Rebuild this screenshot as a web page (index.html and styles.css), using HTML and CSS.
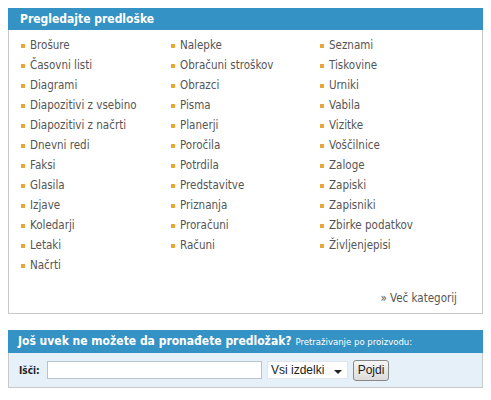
FILE: index.html
```html
<!DOCTYPE html>
<html>
<head>
<meta charset="utf-8">
<link rel="stylesheet" href="styles.css">
</head>
<body>
<div class="box browse">
  <div class="box-head">Pregledajte predloške</div>
  <div class="box-body">
    <div class="cols">
      <ul class="col">
        <li>Brošure</li><li>Časovni listi</li><li>Diagrami</li><li>Diapozitivi z vsebino</li><li>Diapozitivi z načrti</li><li>Dnevni redi</li><li>Faksi</li><li>Glasila</li><li>Izjave</li><li>Koledarji</li><li>Letaki</li><li>Načrti</li>
      </ul>
      <ul class="col">
        <li>Nalepke</li><li>Obračuni stroškov</li><li>Obrazci</li><li>Pisma</li><li>Planerji</li><li>Poročila</li><li>Potrdila</li><li>Predstavitve</li><li>Priznanja</li><li>Proračuni</li><li>Računi</li>
      </ul>
      <ul class="col">
        <li>Seznami</li><li>Tiskovine</li><li>Urniki</li><li>Vabila</li><li>Vizitke</li><li>Voščilnice</li><li>Zaloge</li><li>Zapiski</li><li>Zapisniki</li><li>Zbirke podatkov</li><li>Življenjepisi</li>
      </ul>
    </div>
    <div class="more">» Več kategorij</div>
  </div>
</div>
<div class="box search">
  <div class="box-head"><b>Još uvek ne možete da pronađete predložak?</b> <span class="sub">Pretraživanje po proizvodu:</span></div>
  <div class="search-body">
    <label class="lbl">Išči:</label>
    <input class="q" type="text">
    <div class="sel"><span>Vsi izdelki</span><span class="arr"></span></div>
    <button class="btn">Pojdi</button>
  </div>
</div>
</body>
</html>
```
FILE: styles.css
```css
body {
  margin: 8px;
  font-family: "DejaVu Sans Condensed", "DejaVu Sans", sans-serif;
  font-size: 11.5px;
  color: #555;
  background: #fff;
}
.box {
  width: 473px;
  border: 1px solid #c9c9c9;
  border-top: none;
}
.box-head {
  background: #3592c4;
  color: #fff;
  height: 22px;
  line-height: 22px;
  padding-left: 12px;
  font-weight: bold;
  font-size: 12px;
  margin: 0 -1px 0 -1px;
}
.box-body {
  padding: 6px 0 0 11px;
  height: 283px;
  box-sizing: border-box;
}
.cols {
  display: flex;
}
.col {
  list-style: none;
  margin: 0;
  padding: 0;
  width: 150px;
}
.col:nth-child(2) { width: 149px; }
.col li {
  height: 20px;
  line-height: 18px;
  padding-left: 10px;
  position: relative;
}
.col li::before {
  content: "";
  position: absolute;
  left: 1px;
  top: 8px;
  width: 4px;
  height: 4px;
  background: #e8a53a;
}
.more {
  text-align: right;
  padding-right: 25px;
  margin-top: 13px;
  line-height: 18px;
}
.search {
  margin-top: 16px;
  background: #e5f0f9;
}
.search .box-head {
  height: 23px;
  line-height: 23px;
  padding-left: 10px;
}
.sub {
  font-weight: normal;
  font-size: 9.5px;
}
.search-body {
  display: flex;
  align-items: center;
  height: 34px;
  padding-left: 10px;
}
.lbl {
  font-weight: bold;
  font-size: 10px;
  color: #222;
  width: 28px;
}
.q {
  width: 215px;
  height: 18px;
  box-sizing: border-box;
  border: 1px solid #b7c3cd;
  margin: 0;
  padding: 0;
  background: #fff;
}
.sel {
  margin-left: 5px;
  width: 81px;
  height: 18px;
  background: #fff;
  border: 1px solid #e0e6ec;
  box-sizing: border-box;
  display: flex;
  align-items: center;
  justify-content: space-between;
  padding: 0 5px 0 3px;
  font-family: "Liberation Sans", sans-serif;
  font-size: 12px;
  color: #222;
}
.arr {
  width: 0;
  height: 0;
  border-left: 4px solid transparent;
  border-right: 4px solid transparent;
  border-top: 4px solid #222;
  margin-top: 3px;
}
.btn {
  margin-left: 5px;
  height: 21px;
  width: 36px;
  padding: 0;
  font-family: "Liberation Sans", sans-serif;
  font-size: 12px;
  color: #222;
  border: 1px solid #888;
  border-radius: 3px;
  background: linear-gradient(#f6f6f6, #dcdcdc);
}
```
